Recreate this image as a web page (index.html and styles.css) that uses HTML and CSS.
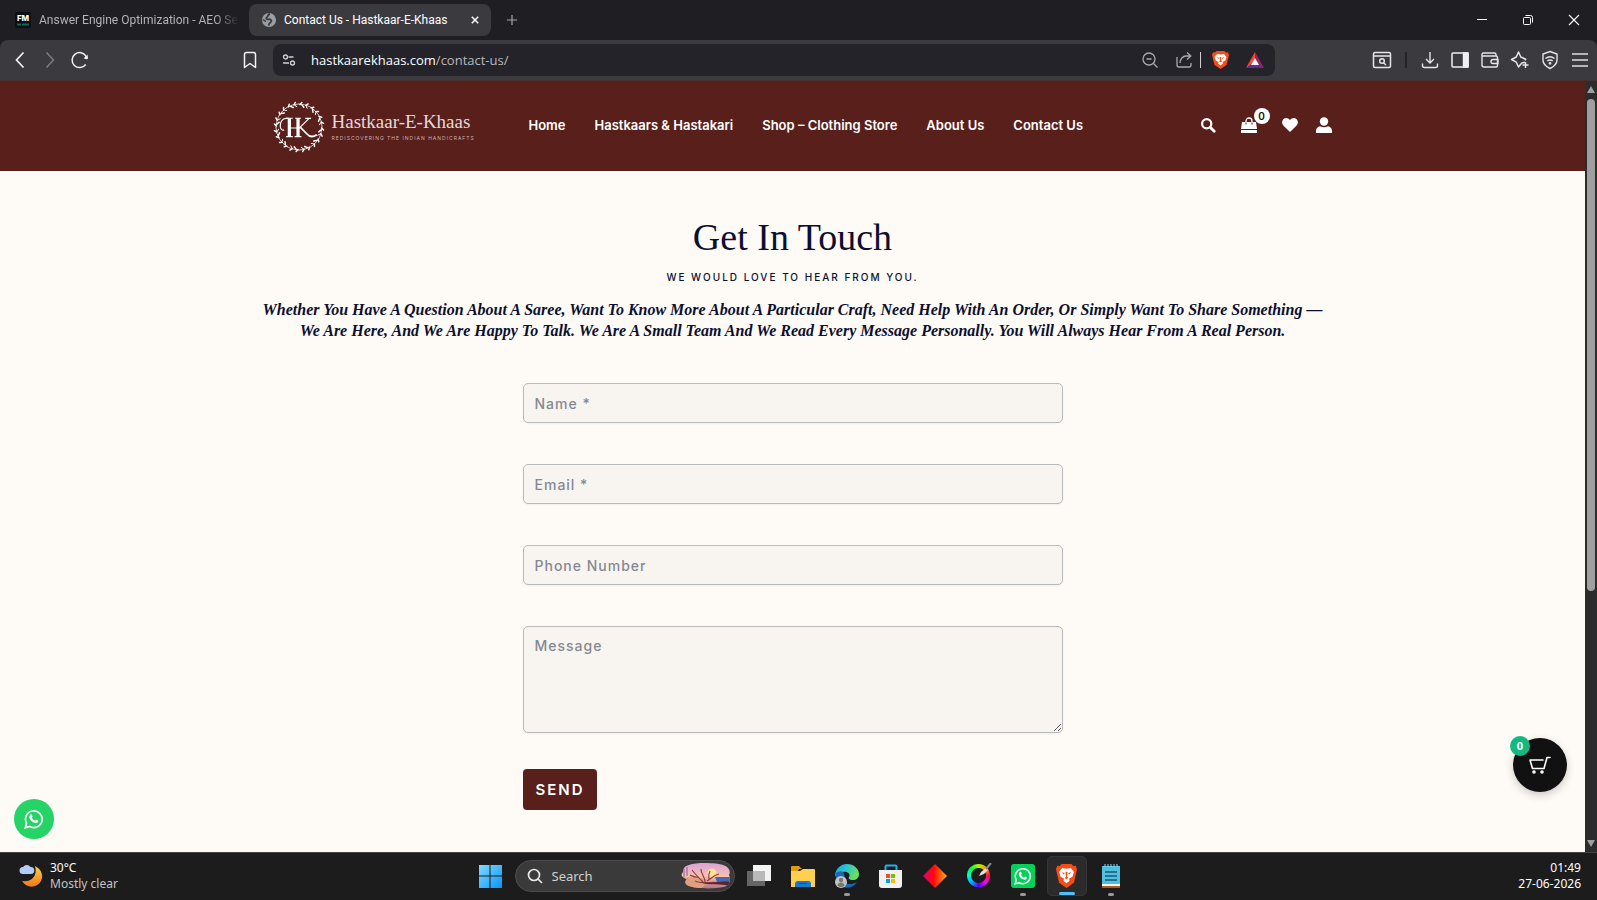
FILE: index.html
```html
<!DOCTYPE html>
<html lang="en">
<head>
  <meta charset="UTF-8" />
  <meta name="viewport" content="width=device-width, initial-scale=1.0"/>
  <title>Contact Us - Hastkaar-E-Khaas</title>
  <link rel="stylesheet" href="styles.css">
</head>
<body>
  <!-- Tabs -->
  <div class="tabstrip">
    <div class="tab">
      <svg width="16" height="16" viewBox="0 0 16 16"><rect width="16" height="16" rx="2" fill="#0b0f14"/><text x="8" y="9" text-anchor="middle" font-family="Inter, sans-serif" font-weight="800" font-size="8" fill="#fff">FM</text><path d="M2 12.500h4M7 12.500h7" stroke="#0f6b5c" stroke-width="2"/></svg>
      <span class="tab-title">Answer Engine Optimization - AEO Se</span>
    </div>
    <div class="tab active">
      <svg width="14" height="14" viewBox="0 0 14 14"><circle cx="7" cy="7" r="7" fill="#9b9ea5"/><path d="M8 1C5 1.500 6.500 3.500 5 4.300 3.500 5.200 4.500 6.500 6.500 6.300c2.200-.2 3.500.9 2.700 2.400-.6 1.100-2 .8-2.700 3.800" fill="none" stroke="#3b3a3f" stroke-width="1.800"/><path d="M.8 7c1.600 0 2.600.6 2.700 2" fill="none" stroke="#3b3a3f" stroke-width="1.400"/></svg>
      <span class="tab-title">Contact Us - Hastkaar-E-Khaas</span>
      <button class="icon-btn" aria-label="Close tab"><svg width="8" height="8" viewBox="0 0 8 8"><path d="M.8.8l6.400 6.400M7.200.8L.8 7.200" stroke="#fff" stroke-width="1.500"/></svg></button>
    </div>
    <button class="icon-btn new-tab" aria-label="New tab"><svg width="10" height="10" viewBox="0 0 10 10"><path d="M5 0v10M0 5h10" stroke="#a5a5a8" stroke-width="1.200"/></svg></button>
    <div class="window-controls">
      <button class="icon-btn" aria-label="Minimize"><svg width="12" height="12" viewBox="0 0 12 12"><path d="M1 5.500h10" stroke="#fff"/></svg></button>
      <button class="icon-btn" aria-label="Restore"><svg width="12" height="12" viewBox="0 0 12 12" fill="none" stroke="#fff"><rect x="1.500" y="3.500" width="7" height="7" rx="1"/><path d="M3.500 1.500h5a2 2 0 0 1 2 2v5"/></svg></button>
      <button class="icon-btn" aria-label="Close"><svg width="12" height="12" viewBox="0 0 12 12"><path d="M1 1l10 10M11 1L1 11" stroke="#fff" stroke-width="1.100"/></svg></button>
    </div>
  </div>

  <!-- Toolbar -->
  <div class="toolbar">
    <div class="nav-buttons">
      <button class="icon-btn" aria-label="Back"><svg width="20" height="20" viewBox="0 0 20 20" fill="none" stroke="#f2f2f4" stroke-width="1.700"><path d="M13.500 2.500L6.500 10l7 7.500"/></svg></button>
      <button class="icon-btn" aria-label="Forward"><svg width="20" height="20" viewBox="0 0 20 20" fill="none" stroke="#7d7c81" stroke-width="1.500"><path d="M6.500 2.500l7 7.500-7 7.500"/></svg></button>
      <button class="icon-btn" aria-label="Reload"><svg width="20" height="20" viewBox="0 0 20 20" fill="none" stroke="#f2f2f4" stroke-width="1.500"><path d="M15.700 14.500A7.500 7.500 0 1 1 16.200 6.500"/><circle cx="16.300" cy="7.700" r="1.600" fill="#f2f2f4" stroke="none"/><path d="M17.600 4.500v4h-4z" fill="#f2f2f4" stroke="none"/></svg></button>
      <button class="icon-btn bookmark" aria-label="Bookmark"><svg width="20" height="20" viewBox="0 0 20 20" fill="none" stroke="#f2f2f4" stroke-width="1.500"><path d="M4.500 17.500v-13a2 2 0 0 1 2-2h7a2 2 0 0 1 2 2v13L10 13.500z" stroke-linejoin="round"/></svg></button>
    </div>
    <div class="urlbar">
      <svg width="16" height="16" viewBox="0 0 16 16" fill="none" stroke="#d0d0d3" stroke-width="1.300"><circle cx="4.500" cy="5" r="2"/><path d="M7.500 5h5M2 11h6"/><circle cx="11.500" cy="11" r="2"/></svg>
      <span class="url">hastkaarekhaas.com<span>/contact-us/</span></span>
      <button class="icon-btn" aria-label="Zoom"><svg width="18" height="18" viewBox="0 0 18 18" fill="none" stroke="#a9a9ad" stroke-width="1.300"><circle cx="8" cy="8" r="6"/><path d="M12.500 12.500l4 4M5.500 8h5"/></svg></button>
      <button class="icon-btn share" aria-label="Share"><svg width="18" height="18" viewBox="0 0 18 18" fill="none" stroke="#a9a9ad" stroke-width="1.300"><path d="M2 6v8a2 2 0 0 0 2 2h10a2 2 0 0 0 2-2v-2M5 12c0-4 3-7 6-7h4.500M12 1.500L15.800 5 12 8.500"/></svg></button>
      <span class="divider"></span>
      <button class="icon-btn" aria-label="Brave Shields"><svg width="17" height="18" viewBox="0 0 17 18"><use href="#brave"/></svg></button>
      <button class="icon-btn rewards" aria-label="Brave Rewards"><svg width="18" height="16" viewBox="0 0 18 16"><path d="M9 0L0 16l9-6z" fill="#ff4724"/><path d="M9 0l9 16-9-6z" fill="#9e1f63"/><path d="M0 16h18l-9-7z" fill="#662d91"/><path d="M9 6l-4 7h8z" fill="#fff"/></svg></button>
    </div>
    <div class="toolbar-actions">
      <button class="icon-btn" aria-label="Search page"><svg width="20" height="20" viewBox="0 0 20 20" fill="none" stroke="#e6e6e8" stroke-width="1.500"><rect x="1.500" y="2.500" width="17" height="15" rx="1.500"/><path d="M2 6h16M11.500 12.800l2.500 2.200"/><circle cx="10" cy="11" r="2.300"/></svg></button>
      <span class="divider"></span>
      <button class="icon-btn" aria-label="Downloads"><svg width="20" height="20" viewBox="0 0 20 20" fill="none" stroke="#e6e6e8" stroke-width="1.400"><path d="M10 2v11M6 9l4 4 4-4M2.500 13.500v2a2 2 0 0 0 2 2h11a2 2 0 0 0 2-2v-2"/></svg></button>
      <button class="icon-btn" aria-label="Sidebar"><svg width="20" height="20" viewBox="0 0 20 20" fill="none" stroke="#f0f0f2" stroke-width="1.500"><rect x="2" y="3" width="16" height="14" rx="1"/><path d="M13.500 3H18v14h-4.500z" fill="#f0f0f2"/></svg></button>
      <button class="icon-btn" aria-label="Wallet"><svg width="20" height="20" viewBox="0 0 20 20" fill="none" stroke="#e6e6e8" stroke-width="1.400"><path d="M16 6V4.500A1.500 1.500 0 0 0 14.500 3h-11A1.500 1.500 0 0 0 2 4.500V15a2 2 0 0 0 2 2h12a1.500 1.500 0 0 0 1.500-1.500v-8A1.500 1.500 0 0 0 16 6H2M18 9.500h-5a2 2 0 0 0 0 4h5z"/></svg></button>
      <button class="icon-btn" aria-label="Leo AI"><svg width="20" height="20" viewBox="0 0 20 20" fill="none" stroke="#e6e6e8" stroke-width="1.500" stroke-linejoin="round"><path d="M15 12.300l-3.200.7-3.300 4-2.200-4.800-4.800-2.700 4.800-2.500L8.500 2l2.300 5 4.900 2.300-1 1M15.500 12v6M12.500 15h6"/></svg></button>
      <button class="icon-btn" aria-label="VPN"><svg width="20" height="20" viewBox="0 0 20 20" fill="none" stroke="#e6e6e8" stroke-width="1.400"><path d="M10 1.500l7 2.500v6c0 4-3 6.500-7 8.500-4-2-7-4.500-7-8.500V4zM5.500 8.500c3-2.300 6-2.300 9 0M7.300 11c1.800-1.400 3.600-1.400 5.400 0"/><circle cx="10" cy="13.300" r=".7" fill="#e6e6e8"/></svg></button>
      <button class="icon-btn" aria-label="Menu"><svg width="20" height="20" viewBox="0 0 20 20" stroke="#b5b5b8" stroke-width="2"><path d="M2 4h16M2 10h16M2 16h16"/></svg></button>
    </div>
  </div>

  <!-- Page -->
  <div class="viewport">
    <div class="page">
      <header class="site-header">
        <div class="header-inner">
          <a class="logo" href="#">
            <svg width="52" height="52" viewBox="0 0 54 54">
              <defs>
                <g id="sprig" fill="none" stroke="#fff" stroke-linecap="round">
                  <path d="M27 3.200A24 24 0 0 1 38.500 6" stroke-width=".7"/>
                  <path d="M28 3.500l2-2M30 4l2 2.500M34 4.500l2.500-1.500" stroke-width="1.500"/>
                  <path d="M34.500 5.500l1 2" stroke-width="1"/>
                </g>
              </defs>
              <use href="#sprig"/>
              <use href="#sprig" transform="rotate(30 27 27)"/>
              <use href="#sprig" transform="rotate(60 27 27)"/>
              <use href="#sprig" transform="rotate(90 27 27)"/>
              <use href="#sprig" transform="rotate(120 27 27)"/>
              <use href="#sprig" transform="rotate(150 27 27)"/>
              <use href="#sprig" transform="rotate(180 27 27)"/>
              <use href="#sprig" transform="rotate(210 27 27)"/>
              <use href="#sprig" transform="rotate(240 27 27)"/>
              <use href="#sprig" transform="rotate(270 27 27)"/>
              <use href="#sprig" transform="rotate(300 27 27)"/>
              <use href="#sprig" transform="rotate(330 27 27)"/>
              <!-- H stems and crossbar, then the K with its tail -->
              <path d="M16.500 18h-3c-4 0-6 4-6 8 0 3 2 5 4 4" fill="none" stroke="#fff" stroke-width="1.200"/>
              <path d="M17 18v19M26 18v19" stroke="#fff" stroke-width="3.400"/>
              <path d="M13.500 18h7M13.500 37h7M23 18h6M22.500 37h7M17 28h9" stroke="#fff" stroke-width="1.100"/>
              <path d="M37.500 18L27 28.500M33.500 18h6" stroke="#fff" stroke-width="1.200"/>
              <path d="M28.500 27.500l6.500 6.500c2.500 3 6 4 10.500 1" fill="none" stroke="#fff" stroke-width="1.800"/>
            </svg>
            <span class="logo-text">
              <span class="logo-name">Hastkaar-E-Khaas</span>
              <span class="logo-tagline">REDISCOVERING THE INDIAN HANDICRAFTS</span>
            </span>
          </a>
          <nav class="site-nav">
            <a href="#">Home</a>
            <a href="#">Hastkaars &amp; Hastakari</a>
            <a href="#">Shop – Clothing Store</a>
            <a href="#">About Us</a>
            <a href="#">Contact Us</a>
          </nav>
          <div class="header-icons">
            <a href="#" class="search-link" aria-label="Search"><svg width="16" height="16" viewBox="0 0 16 16" fill="none" stroke="#fff"><circle cx="6.700" cy="6.700" r="4.600" stroke-width="2.200"/><path d="M10.200 10.200l4 4" stroke-width="2.800" stroke-linecap="round"/></svg></a>
            <a href="#" class="bag-link" aria-label="Cart"><svg width="16" height="16" viewBox="0 0 16 16"><path d="M1 5h14l1 7H0zM0 13h16v3H0z" fill="#fff"/><path d="M5 7V4a3 3 0 0 1 6 0v3" fill="none" stroke="#fff" stroke-width="1.300"/><path d="M5 5.500v2M11 5.500v2" stroke="#591f1b"/></svg><span class="bag-count">0</span></a>
            <a href="#" aria-label="Wishlist"><svg width="16" height="16" viewBox="0 0 16 16"><path d="M8 15L1.300 8.500C-1.500 5 1 1 4.300 1 6 1 7.300 2 8 3.200 8.700 2 10 1 11.700 1 15 1 17.500 5 14.700 8.500z" fill="#fff"/></svg></a>
            <a href="#" aria-label="Account"><svg width="16" height="16" viewBox="0 0 16 16" fill="#fff"><circle cx="8" cy="4.500" r="4.200"/><path d="M0 16v-2c0-3 2-4.500 4-4.800 2.500 1.500 5.500 1.500 8 0 2 .3 4 1.800 4 4.800v2z"/></svg></a>
          </div>
        </div>
      </header>

      <main class="contact">
        <h1>Get In Touch</h1>
        <p class="subtitle">WE WOULD LOVE TO HEAR FROM YOU.</p>
        <p class="intro">Whether You Have A Question About A Saree, Want To Know More About A Particular Craft, Need Help With An Order, Or Simply Want To Share Something —<br>We Are Here, And We Are Happy To Talk. We Are A Small Team And We Read Every Message Personally. You Will Always Hear From A Real Person.</p>
        <form class="contact-form">
          <input type="text" id="name" placeholder="Name *" aria-label="Name">
          <input type="email" id="email" placeholder="Email *" aria-label="Email">
          <input type="tel" id="phone" placeholder="Phone Number" aria-label="Phone Number">
          <textarea id="message" placeholder="Message" aria-label="Message"></textarea>
          <button type="button" class="send">SEND</button>
        </form>
      </main>
    </div>

    <div class="scrollbar">
      <svg width="8" height="7" viewBox="0 0 8 7"><path d="M4 0l4 7H0z" fill="#9f9f9f"/></svg>
      <div class="track"><div class="thumb"></div></div>
      <svg width="8" height="7" viewBox="0 0 8 7"><path d="M4 7l4-7H0z" fill="#9f9f9f"/></svg>
    </div>

    <a class="whatsapp" href="#" aria-label="WhatsApp"><svg width="20" height="20" viewBox="0 0 24 24"><use href="#wa"/></svg></a>
    <button class="cart" aria-label="Open cart">
      <svg width="22" height="18" viewBox="0 0 22 18" fill="none" stroke="#fff" stroke-width="1.600" stroke-linecap="round" stroke-linejoin="round"><path d="M14 4H1l2.500 8.500H15L18 1.500h3"/><circle cx="5" cy="16" r="1"/><circle cx="13" cy="16" r="1"/></svg>
      <span class="cart-count">0</span>
    </button>
  </div>

  <!-- Taskbar -->
  <div class="taskbar">
    <div class="weather">
      <svg width="24" height="24" viewBox="0 0 24 24"><defs><linearGradient id="moon" x1="0" y1="0" x2="0" y2="1"><stop offset="0" stop-color="#fcd04a"/><stop offset="1" stop-color="#ee7a1c"/></linearGradient></defs><path d="M16 2c6 3 9 9 6 15-4 7-14 8-19 0 9 2 16-5 13-15z" fill="url(#moon)"/><path d="M4 10a3.500 3.500 0 0 1 0-7 4.500 4.500 0 0 1 7.500 0A3.500 3.500 0 0 1 12 10z" fill="#b4cdf8"/></svg>
      <div class="weather-text"><span>30°C</span><span class="muted">Mostly clear</span></div>
    </div>
    <div class="apps">
      <button class="app" aria-label="Start"><svg width="24" height="24" viewBox="0 0 24 24"><defs><linearGradient id="win" x1="0" y1="0" x2="1" y2="1"><stop offset="0" stop-color="#7fdcff"/><stop offset="1" stop-color="#0b93f6"/></linearGradient></defs><path d="M1 1h10.500v10.500H1zM12.500 1H24v10.500H12.500zM1 12.500h10.500V24H1zM12.500 12.500H24V24H12.500z" fill="url(#win)"/></svg></button>
      <div class="search">
        <svg width="16" height="16" viewBox="0 0 16 16" fill="none" stroke="#e8e8e8" stroke-width="1.700"><circle cx="7" cy="7" r="5.500"/><path d="M11 11l4 4"/></svg>
        <input type="text" placeholder="Search" aria-label="Search">
        <svg width="50" height="26" viewBox="0 0 50 26"><defs><linearGradient id="dusk" x1="0" y1="0" x2="0" y2="1"><stop offset="0" stop-color="#d9a2d8"/><stop offset=".5" stop-color="#f7c1b0"/><stop offset="1" stop-color="#b86f86"/></linearGradient><clipPath id="blob"><path d="M8 2C16-1 36 0 42 2c6 2 8 6 6 10 2 5 1 10-5 12-9 2-28 2-35-1-5-2-4-5-2-7-5-1-7-4-4-7 0-4 2-6 6-7z"/></clipPath></defs><g clip-path="url(#blob)"><path d="M0 0h50v26H0z" fill="url(#dusk)"/><circle cx="31" cy="10" r="4.500" fill="#ffe09a"/><path d="M34 14h16v9L36 19z" fill="#4668b0"/><path d="M0 15c12-2 20 0 28 2l-8 9H0z" fill="#e0a080"/><path d="M3 14V6M6 13V4" stroke="#8a5a9a"/><path d="M14 18c9 4 18-1 34 3M22 19C16 13 14 11 11 7M18 14c-4 1-7-1-9-2M24 19c0-6-4-7-4-13M26 18c5-3 7-6 12-7M28 16c-1-4 0-6 1-8" stroke="#8e3f42" stroke-width="1.200" fill="none"/><path d="M18 19c10 4 22 1 31 4v-4c-10-2-20 3-31 0z" fill="#59252f"/></g></svg>
      </div>
      <button class="app" aria-label="Task view"><svg width="24" height="24" viewBox="0 0 24 24"><path d="M6 1h18v16H6z" fill="#f3f3f3"/><path d="M0 7h18v15H0z" fill="#666"/><path d="M6 7h12v10H6z" fill="#b9b9b9"/></svg></button>
      <button class="app" aria-label="File Explorer"><svg width="24" height="24" viewBox="0 0 24 24"><path d="M0 3a1 1 0 0 1 1-1h7l3 3h-3l-2 4H0z" fill="#dd9c0b"/><path d="M0 7h9l3-2h11a1 1 0 0 1 1 1v17H0z" fill="#ffd04f"/><path d="M4 23v-3a3 3 0 0 1 3-3h10a3 3 0 0 1 3 3v3z" fill="#1479cf"/><path d="M8 19.500h8" stroke="#0a559e"/></svg></button>
      <button class="app running" aria-label="Edge"><svg width="24" height="24" viewBox="0 0 24 24"><defs><linearGradient id="edge" x1="0" y1="0" x2="1" y2=".3"><stop offset="0" stop-color="#1a9fe0"/><stop offset=".5" stop-color="#2bc4d2"/><stop offset="1" stop-color="#6be05c"/></linearGradient></defs><path d="M0 11C1 4 6 0 12 0c7 0 12 5 12 10 0 4-3 6-6 6-4 0-5-2-4-3 2-3-2-6-6-5-4 0-7 2-8 5z" fill="url(#edge)"/><path d="M1 9c6-4 10 0 8 5-1 6 6 8 13 4-3 5-9 7-14 5C3 21 0 15 1 9z" fill="#1769b8"/><circle cx="6" cy="18" r="6" fill="#c4c4c4"/><circle cx="6" cy="16" r="2.200" fill="#777"/><path d="M2.500 21.500c0-4 7-4 7 0-2 2-5 2-7 0z" fill="#777"/></svg></button>
      <button class="app" aria-label="Store"><svg width="24" height="24" viewBox="0 0 24 24"><path d="M6.500 7V2.500a1 1 0 0 1 1-1h9a1 1 0 0 1 1 1V7" fill="none" stroke="#1fb0f0" stroke-width="2"/><path d="M0 6h23v15a3 3 0 0 1-3 3H3a3 3 0 0 1-3-3z" fill="#f1f1f1"/><path d="M7 10h4v4H7z" fill="#f04e23"/><path d="M12 10h4v4h-4z" fill="#7fba00"/><path d="M7 15h4v4H7z" fill="#00a4ef"/><path d="M12 15h4v4h-4z" fill="#ffb900"/></svg></button>
      <button class="app" aria-label="Diamond"><svg width="24" height="24" viewBox="0 0 24 24"><defs><linearGradient id="dia"><stop offset="0" stop-color="#e0007a"/><stop offset=".45" stop-color="#ff0808"/><stop offset="1" stop-color="#ffae20"/></linearGradient></defs><path d="M12 0l12 12-12 12L0 12z" fill="url(#dia)"/></svg></button>
      <button class="app" aria-label="Color picker"><span class="wheel"></span><svg class="pen" width="14" height="14" viewBox="0 0 14 14"><path d="M1 13l2-4 5-4 2 2-4 4z" fill="#ddd"/><path d="M8 6l5-6" stroke="#888" stroke-width="2"/></svg></button>
      <button class="app running" aria-label="WhatsApp"><svg width="24" height="24" viewBox="0 0 24 24"><rect width="24" height="24" rx="3" fill="#04d15a"/><use href="#wa" width="18" height="18" x="3" y="3"/></svg></button>
      <button class="app current" aria-label="Brave"><svg width="21" height="24" viewBox="0 0 17 18" preserveAspectRatio="none"><use href="#brave"/></svg></button>
      <button class="app running" aria-label="Notepad"><svg width="20" height="24" viewBox="0 0 20 24"><path d="M1 2h18v18H1z" fill="#51bfe0"/><path d="M1 20h18v2H1z" fill="#f4f4f4"/><path d="M1 22h18v2H1z" fill="#a85c1e"/><path d="M4 8h12M4 12h12M4 16h12" stroke="#145a78" stroke-width="1.500"/><path d="M4 0v3M7 0v3M10 0v3M13 0v3M16 0v3" stroke="#8be2f5"/></svg></button>
    </div>
    <div class="clock"><span>01:49</span><span>27-06-2026</span></div>
  </div>

  <svg class="sprite" width="0" height="0" aria-hidden="true">
    <symbol id="brave" viewBox="0 0 17 18" preserveAspectRatio="none">
      <path d="M4.500 0h8l1.500 1.500 2-.2L17 4l-.5 2L14.500 14 8.500 18l-6-4L.5 6 0 4l1-2.700 2 .2z" fill="#fb4b14"/>
      <path d="M5 3l3.500.6L12 3l2.500 3-1.200 3.500L10.500 11l.5 1.500-2.500 2-2.500-2 .5-1.500-2.800-1.500L2.500 6z" fill="#fff"/>
      <path d="M4.500 6.200l2.500.6-.5 1.200zM12.500 6.200l-2.500.6.5 1.200zM7.700 6l.3 3.500-1 1 1.500.7 1.500-.7-1-1 .3-3.500z" fill="#fb4b14"/>
    </symbol>
    <symbol id="wa" viewBox="0 0 24 24">
      <path d="M1.500 22.500L3 17A10 10 0 1 1 7 21z" fill="none" stroke="#fff" stroke-width="2"/>
      <path d="M8 6.500c.5-.3 1.200-.2 1.500.4l.8 1.900c.2.5-.8 1.400-.8 1.700.8 1.600 2 2.700 3.800 3.500.4 0 1.100-1.300 1.500-1.200l2 1c.5.300.4.900.2 1.500-.6 1.300-2.200 1.800-3.500 1.500C9.500 15.800 7.500 13.500 6.500 10.500 6.200 9 6.700 7.300 8 6.500z" fill="#fff"/>
    </symbol>
  </svg>
</body>
</html>
```
FILE: styles.css
```css
* {
  box-sizing: border-box;
}
body {
  margin: 0;
  height: 100vh;
  display: flex;
  flex-direction: column;
  overflow: hidden;
  background: #1f1e23;
  color: #fff;
  font-family: 'Noto Sans', sans-serif;
  font-size: 12px;
}
button {
  font-family: inherit;
  border: none;
  background: none;
  padding: 0;
  cursor: pointer;
}
svg {
  display: block;
  flex: none;
}
a {
  color: inherit;
  text-decoration: none;
}
.icon-btn {
  display: flex;
  align-items: center;
  justify-content: center;
}
.sprite {
  position: absolute;
}

/* tabs */
.tabstrip {
  display: flex;
  align-items: center;
  height: 40px;
  flex: none;
}
.tab {
  display: flex;
  align-items: center;
  gap: 8px;
  width: 242px;
  height: 32px;
  padding: 0 6px 0 15px;
  color: #b4b3b8;
}
.tab:first-child {
  width: 249px;
  padding-right: 10px;
}
.tab:first-child .tab-title {
  mask-image: linear-gradient(to right, #000 88%, transparent);
}
.tab.active {
  background: #3b3a3f;
  border-radius: 8px;
  color: #fff;
  padding: 0 12px 0 13px;
}
.tab-title {
  flex: 1;
  white-space: nowrap;
  overflow: hidden;
  font-family: Roboto, sans-serif;
}
.new-tab {
  width: 42px;
  height: 32px;
}
.window-controls {
  display: flex;
  margin-left: auto;
}
.window-controls .icon-btn {
  width: 46px;
  height: 40px;
}

/* toolbar */
.toolbar {
  display: flex;
  align-items: center;
  height: 41px;
  flex: none;
  background: #3b3a3f;
  border-radius: 8px 8px 0 0;
  border-bottom: 1px solid #47302f;
}
.nav-buttons {
  display: flex;
  gap: 10px;
  width: 273px;
  padding: 0 13px 0 10px;
}
.bookmark {
  margin-left: auto;
}
.urlbar {
  flex: 1;
  display: flex;
  align-items: center;
  height: 32px;
  padding: 0 11px 0 8px;
  background: #242329;
  border-radius: 8px;
}
.url {
  flex: 1;
  margin-left: 14px;
  font-size: 13px;
  font-family: 'Open Sans', sans-serif;
}
.url span {
  color: #b9b9bd;
}
.share {
  margin: 0 7px 0 16px;
}
.urlbar .divider {
  width: 1px;
  height: 16px;
  background: #d0d0d3;
  margin-right: 11px;
}
.rewards {
  margin-left: 17px;
}
.toolbar-actions {
  display: flex;
  align-items: center;
  justify-content: flex-end;
  gap: 10px;
  width: 322px;
  padding-right: 7px;
}
.toolbar-actions .divider {
  width: 2px;
  height: 16px;
  margin: 0 3px;
  background: #242329;
}

/* page */
.viewport {
  flex: 1;
  min-height: 0;
  display: flex;
  position: relative;
  background: #fefaf5;
}
.page {
  flex: 1;
  overflow: hidden;
  color: #0b1030;
  font-family: Inter, sans-serif;
}
.site-header {
  background: #591f1b;
  color: #fff;
}
.header-inner {
  max-width: 1078px;
  height: 90px;
  margin: 0 auto;
  padding: 0 0 2px 19px;
  display: flex;
  align-items: center;
}
.logo {
  display: flex;
  align-items: center;
  gap: 7px;
  width: 256px;
  padding-top: 4px;
}
.logo-text {
  display: flex;
  flex-direction: column;
}
.logo-name {
  font-family: 'Liberation Serif', serif;
  font-size: 19px;
  line-height: 22px;
  color: #e6d9d7;
}
.logo-tagline {
  font-size: 5px;
  line-height: 10px;
  letter-spacing: 1px;
  white-space: nowrap;
  color: #c9b0ae;
}
.site-nav {
  display: flex;
  gap: 29px;
  font-size: 13px;
  font-weight: 600;
  white-space: nowrap;
}
.header-icons {
  display: flex;
  align-items: center;
  gap: 18px;
  margin-left: auto;
}
.search-link {
  margin-right: 7px;
}
.bag-link {
  position: relative;
  margin-right: 7px;
}
.bag-count {
  position: absolute;
  left: 13px;
  top: -9px;
  width: 16px;
  height: 16px;
  border-radius: 50%;
  background: #fff;
  color: #111;
  font-size: 10px;
  font-weight: 600;
  line-height: 16px;
  text-align: center;
}
.contact {
  padding-top: 42px;
  text-align: center;
}
h1 {
  margin: 0;
  font-family: 'Liberation Serif', serif;
  font-size: 38px;
  font-weight: 500;
  line-height: 48px;
}
.subtitle {
  margin: 8px 0 0;
  font-size: 10px;
  font-weight: 500;
  line-height: 16px;
  letter-spacing: 2px;
}
.intro {
  margin: 14px 0 0;
  font-family: 'Liberation Serif', serif;
  font-size: 16px;
  font-style: italic;
  font-weight: 600;
  line-height: 21px;
}
.contact-form {
  display: flex;
  flex-direction: column;
  align-items: flex-start;
  gap: 41px;
  max-width: 540px;
  margin: 42px auto 0;
}
.contact-form input,
.contact-form textarea {
  width: 100%;
  height: 40px;
  padding: 10px 11px;
  border: 1px solid #b9babd;
  border-radius: 5px;
  background: #f8f5f0;
  box-shadow: 0 1px 2px rgba(0,0,0,0.05);
  font-family: Inter, sans-serif;
  font-size: 14px;
  font-weight: 500;
  line-height: 18px;
  letter-spacing: 1px;
}
.contact-form textarea {
  height: 107px;
  display: block;
  resize: vertical;
}
.contact-form ::placeholder {
  color: #858893;
  opacity: 1;
}
.send {
  height: 41px;
  margin-top: -5px;
  padding: 0 12px 0 13px;
  background: #591f1b;
  border-radius: 4px;
  color: #fff;
  font-size: 15px;
  font-weight: 600;
  letter-spacing: 2px;
}
.scrollbar {
  display: flex;
  flex-direction: column;
  align-items: center;
  gap: 6px;
  width: 12px;
  padding: 5px 0;
  background: #2c2c2c;
}
.track {
  flex: 1;
  width: 8px;
}
.thumb {
  height: 67%;
  border-radius: 4px;
  background: #9f9f9f;
}
.whatsapp {
  position: absolute;
  left: 14px;
  bottom: 13px;
  width: 40px;
  height: 40px;
  display: flex;
  align-items: center;
  justify-content: center;
  border-radius: 50%;
  background: #25d366;
}
.cart {
  position: absolute;
  right: 30px;
  bottom: 60px;
  width: 54px;
  height: 54px;
  display: flex;
  align-items: center;
  justify-content: center;
  border-radius: 50%;
  background: #111;
  box-shadow: 0 3px 8px rgba(0,0,0,0.2);
}
.cart-count {
  position: absolute;
  left: -3px;
  top: -2px;
  width: 20px;
  height: 20px;
  border-radius: 50%;
  background: #14b881;
  color: #fff;
  font-size: 11px;
  font-weight: 700;
  line-height: 20px;
}

/* taskbar */
.taskbar {
  display: grid;
  grid-template-columns: 1fr auto 1fr;
  align-items: center;
  height: 48px;
  flex: none;
  padding-bottom: 2px;
  background: #1c1c1c;
  border-top: 1px solid #444;
  line-height: 16px;
}
.weather {
  display: flex;
  align-items: center;
  gap: 7px;
  padding-left: 19px;
}
.weather-text,
.clock {
  display: flex;
  flex-direction: column;
}
.muted {
  color: #c4c4c4;
}
.clock {
  align-items: flex-end;
  padding-right: 16px;
}
.apps {
  display: flex;
  align-items: center;
  padding-left: 3px;
}
.app {
  position: relative;
  display: flex;
  align-items: center;
  justify-content: center;
  width: 44px;
  height: 40px;
}
.app.running::after,
.app.current::after {
  content: '';
  position: absolute;
  left: 19px;
  bottom: 0;
  width: 6px;
  height: 3px;
  border-radius: 2px;
  background: #9a9a9a;
}
.app.current {
  width: 40px;
  margin: 0 2px;
  background: #2b2b2b;
  border: 1px solid #363636;
  border-radius: 5px;
}
.app.current::after {
  left: 11px;
  width: 16px;
  background: #4cc2ff;
}
.search {
  display: flex;
  align-items: center;
  gap: 9px;
  width: 220px;
  height: 32px;
  margin: 0 2px 0 3px;
  padding: 0 3px 0 11px;
  border: 1px solid #4d4d4d;
  border-radius: 16px;
  background: #3a3a3a;
}
.search input {
  flex: 1;
  min-width: 0;
  padding: 0;
  border: none;
  background: none;
  color: #fff;
  font-family: 'Noto Sans', sans-serif;
  font-size: 13px;
}
.search input::placeholder {
  color: #d0d0d0;
}
.wheel {
  width: 23px;
  height: 23px;
  border-radius: 50%;
  background: radial-gradient(circle, #1c1c1c 7px, transparent 8px), conic-gradient(#b4f000, #ff9d00, #ff1040, #f0f, #50f, #0af, #0fc, #0f4, #b4f000);
}
.pen {
  position: absolute;
  right: 9px;
  top: 7px;
}
```
